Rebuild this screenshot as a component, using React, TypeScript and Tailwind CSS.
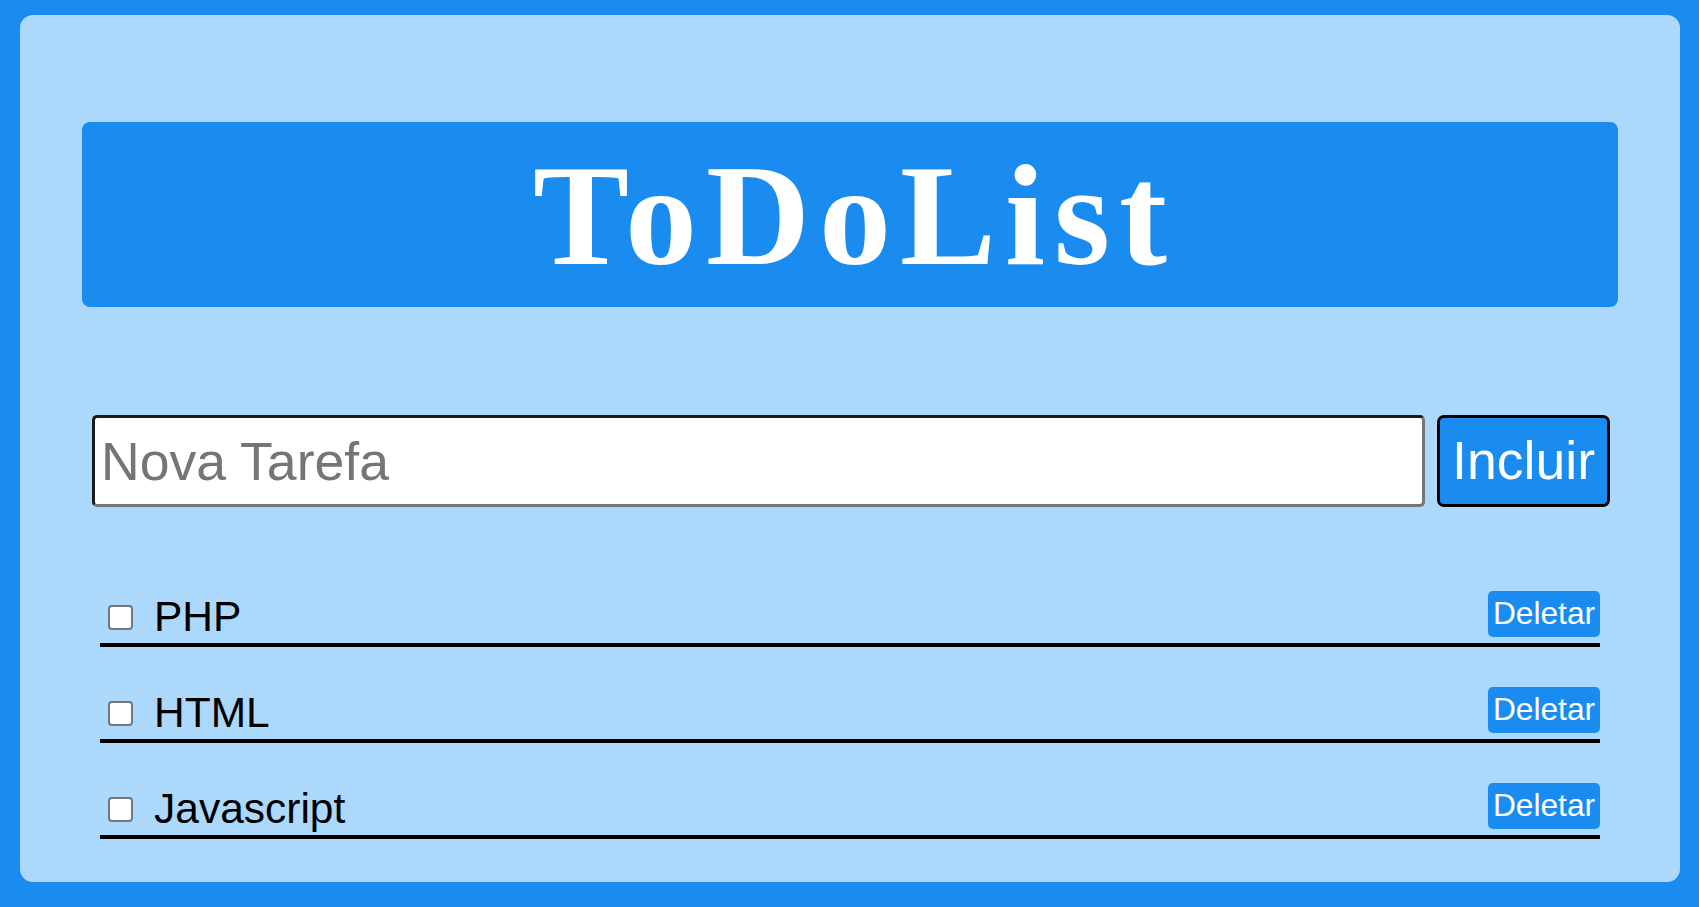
import React, { useState } from "react";

type Task = { id: number; text: string; done: boolean };

export default function App() {
  const [tasks, setTasks] = useState<Task[]>([
    { id: 1, text: "PHP", done: false },
    { id: 2, text: "HTML", done: false },
    { id: 3, text: "Javascript", done: false },
  ]);
  const [value, setValue] = useState("");

  const add = () => {
    if (!value.trim()) return;
    setTasks([...tasks, { id: Date.now(), text: value.trim(), done: false }]);
    setValue("");
  };

  return (
    <div className="min-h-screen bg-[#1a8cf0] pl-[20px] pr-[19px] pt-[15px] pb-[25px] font-['Liberation_Sans',Arial,sans-serif]">
      <div className="bg-[#acd8fc] rounded-[13px] px-[62px] pt-[107px] pb-[43px]">
        <h1 className="h-[185px] bg-[#1a8cf0] rounded-[8px] text-center text-white font-bold text-[144px] tracking-[9px] pl-[9px] leading-[188px] font-['Liberation_Serif','Times_New_Roman',serif]">
          ToDoList
        </h1>

        <div className="mt-[108px] pl-[10px] pr-[8px] flex gap-[12px]">
          <input
            value={value}
            onChange={(e) => setValue(e.target.value)}
            placeholder="Nova Tarefa"
            className="flex-1 min-w-0 h-[92px] bg-white border-[3px] border-solid border-t-[#1b1b1b] border-l-[#1b1b1b] border-b-[#767676] border-r-[#767676] rounded-[5px] pl-[6px] text-[53.6px] text-black placeholder:text-[#757575] outline-none"
          />
          <button
            onClick={add}
            className="w-[173px] h-[92px] bg-[#1a8cf0] border-[3px] border-black rounded-[7px] text-white text-[53.6px] leading-none flex items-center justify-center"
          >
            Incluir
          </button>
        </div>

        <ul className="mt-[84px] px-[18px] flex flex-col gap-[40px]">
          {tasks.map((t) => (
            <li
              key={t.id}
              className="flex items-center h-[56px] border-b-4 border-black"
            >
              <span
                onClick={() =>
                  setTasks(tasks.map((x) => (x.id === t.id ? { ...x, done: !x.done } : x)))
                }
                className="ml-[8px] w-[25px] h-[25px] shrink-0 bg-white border-2 border-[#767676] rounded-[4px] flex items-center justify-center text-[18px] leading-none"
              >
                {t.done ? "✓" : ""}
              </span>
              <span className="ml-[21px] text-[42.5px] leading-none text-black">{t.text}</span>
              <button
                onClick={() => setTasks(tasks.filter((x) => x.id !== t.id))}
                className="ml-auto self-start w-[112px] h-[46px] bg-[#1a8cf0] rounded-[5px] text-white text-[31.7px] leading-none flex items-center justify-center"
              >
                Deletar
              </button>
            </li>
          ))}
        </ul>
      </div>
    </div>
  );
}
